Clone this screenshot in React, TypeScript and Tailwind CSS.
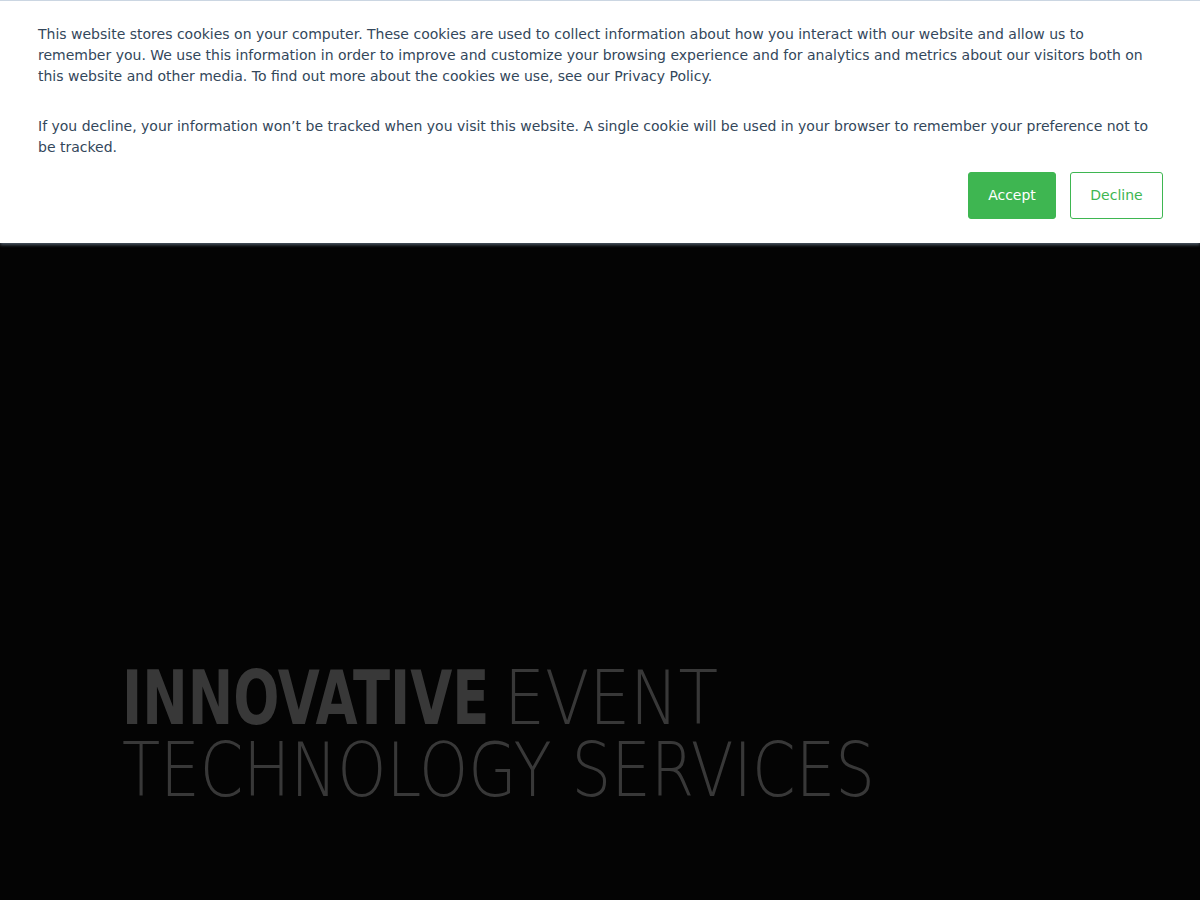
const condensed = { fontFamily: '"DejaVu Sans Condensed", "DejaVu Sans", sans-serif' };
const light = { fontFamily: '"DejaVu Sans", sans-serif' };

export default function App() {
  return (
    <div className="relative w-[1200px] h-[900px] bg-[#040404] overflow-hidden">
      {/* Hero */}
      <div className="absolute inset-0 flex flex-col justify-end pb-[94px] pl-[122px]">
        <h1 className="text-[#383838] text-[74px] leading-[72px] uppercase whitespace-nowrap">
          <div>
            <span className="inline-block origin-left scale-x-[0.816] mr-[-82px] font-bold" style={condensed}>
              Innovative
            </span>
            <span className="inline-block origin-left scale-x-[0.875] ml-[14px] font-extralight" style={light}>
              Event
            </span>
          </div>
          <div className="origin-left scale-x-[0.845] font-extralight" style={light}>
            Technology Services
          </div>
        </h1>
      </div>

      {/* Cookie banner */}
      <div
        className="absolute top-0 left-0 right-0 bg-white border-t border-[#cbd6e2] shadow-[0_2px_3px_rgba(120,140,160,0.6)] pl-[38px] pr-[37px] pt-[23px] pb-[24px] text-[#33475b] text-[14px] leading-[21px]"
        style={{ fontFamily: '"DejaVu Sans", sans-serif' }}
      >
        <div className="pr-[4px]">
          <p className="mb-[29px]">
            This website stores cookies on your computer. These cookies are used to collect information about how you interact with our website and allow us to remember you. We use this information in order to improve and customize your browsing experience and for analytics and metrics about our visitors both on this website and other media. To find out more about the cookies we use, see our Privacy Policy.
          </p>
          <p>
            If you decline, your information won’t be tracked when you visit this website. A single cookie will be used in your browser to remember your preference not to be tracked.
          </p>
        </div>
        <div className="flex justify-end gap-[14px] mt-[14px]">
          <button className="h-[47px] w-[88px] rounded-[3px] bg-[#3eb651] text-white border border-[#3eb651]">Accept</button>
          <button className="h-[47px] w-[93px] rounded-[3px] bg-white text-[#3eb651] border border-[#3eb651]">Decline</button>
        </div>
      </div>
    </div>
  );
}
